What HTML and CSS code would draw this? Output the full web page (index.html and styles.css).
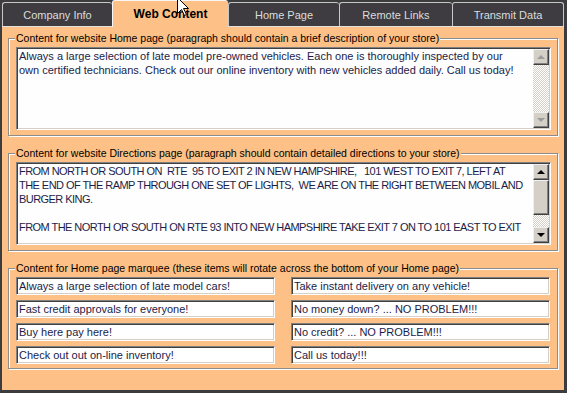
FILE: index.html
```html
<!DOCTYPE html>
<html lang="en">
<head>
    <meta charset="UTF-8">
    <title>Web Content</title>
    <link rel="stylesheet" href="styles.css">
</head>
<body>
    <div class="window">
        <div class="tabs">
            <div class="tab tab-company">Company Info</div>
            <div class="tab tab-web active">Web Content</div>
            <div class="tab tab-home">Home Page</div>
            <div class="tab tab-links">Remote Links</div>
            <div class="tab tab-transmit">Transmit Data</div>
        </div>

        <div class="panel">
            <fieldset class="group">
                <legend>Content for website Home page (paragraph should contain a brief description of your store)</legend>
                <div class="memo">
                    <div class="memo-text">Always a large selection of late model pre-owned vehicles. Each one is thoroughly inspected by our
own certified technicians. Check out our online inventory with new vehicles added daily. Call us today!</div>
                    <div class="scrollbar disabled">
                        <div class="sb-btn"><span class="arrow up"></span></div>
                        <div class="sb-track"></div>
                        <div class="sb-btn"><span class="arrow down"></span></div>
                    </div>
                </div>
            </fieldset>

            <fieldset class="group">
                <legend>Content for website Directions page (paragraph should contain detailed directions to your store)</legend>
                <div class="memo">
                    <div class="memo-text caps">FROM NORTH OR SOUTH ON  RTE  95 TO EXIT 2 IN NEW HAMPSHIRE,   101 WEST TO EXIT 7, LEFT AT
THE END OF THE RAMP THROUGH ONE SET OF LIGHTS,  WE ARE ON THE RIGHT BETWEEN MOBIL AND
BURGER KING.

FROM THE NORTH OR SOUTH ON RTE 93 INTO NEW HAMPSHIRE TAKE EXIT 7 ON TO 101 EAST TO EXIT</div>
                    <div class="scrollbar">
                        <div class="sb-btn"><span class="arrow up"></span></div>
                        <div class="sb-thumb"></div>
                        <div class="sb-track"></div>
                        <div class="sb-btn"><span class="arrow down"></span></div>
                    </div>
                </div>
            </fieldset>

            <fieldset class="group last">
                <legend>Content for Home page marquee (these items will rotate across the bottom of your Home page)</legend>
                <div class="marquee">
                    <input class="line" type="text" value="Always a large selection of late model cars!">
                    <input class="line" type="text" value="Take instant delivery on any vehicle!">
                    <input class="line" type="text" value="Fast credit approvals for everyone!">
                    <input class="line" type="text" value="No money down? ... NO PROBLEM!!!">
                    <input class="line" type="text" value="Buy here pay here!">
                    <input class="line" type="text" value="No credit? ... NO PROBLEM!!!">
                    <input class="line" type="text" value="Check out out on-line inventory!">
                    <input class="line" type="text" value="Call us today!!!">
                </div>
            </fieldset>
        </div>

        <svg class="cursor" width="13" height="20" viewBox="0 0 13 20">
            <path d="M0.5 0.5 V16.5 L4.5 12.5 L7.5 18.5 L9.5 17.5 L6.5 11.5 H11.5 Z" fill="#fff" stroke="#000"/>
        </svg>
    </div>
</body>
</html>
```

FILE: styles.css
```css
* {
    margin: 0;
    padding: 0;
    box-sizing: border-box;
}

body {
    background-color: #3c3b3e;
    font-family: "Liberation Sans", Arial, sans-serif;
    font-size: 11px;
}

.window {
    position: relative;
    width: 567px;
    height: 393px;
    overflow: hidden;
}

/* tab strip */
.tabs {
    display: flex;
    align-items: flex-end;
    height: 26px;
    padding-left: 2px;
}

.tab {
    height: 24px;
    display: flex;
    align-items: center;
    justify-content: center;
    color: #dcdcdc;
    background-color: #3e3c40;
    border-top: 1px solid #c8c8c8;
    border-left: 1px solid #c8c8c8;
    border-radius: 3px 3px 0 0;
}

.tab-company { width: 110px; }
.tab-web { width: 116px; }
.tab-home { width: 111px; }
.tab-links { width: 113px; }
.tab-transmit {
    width: 112px;
    border-right: 1px solid #c8c8c8;
}

.tab.active {
    height: 27px;
    margin-bottom: -1px;
    position: relative;
    z-index: 1;
    background-color: #fdc086;
    border-color: #f6f6f6;
    color: #000;
    font-weight: bold;
    font-size: 12px;
}

/* orange page */
.panel {
    width: 562px;
    height: 364px;
    margin-left: 2px;
    background-color: #fdc086;
    border-top: 1px solid #e4e0dc;
    padding: 5px 6px 0;
}

.group {
    border: 1px solid #8c8c8c;
    box-shadow: inset 1px 1px 0 #fff, 1px 1px 0 #fff;
    padding: 2px 6px 5px 7px;
    margin-bottom: 11px;
}

.group.last {
    padding-bottom: 4px;
}

.group legend {
    padding: 0 1px;
    margin-left: -1px;
    font-size: 10.5px;
    line-height: 13px;
    background-color: #fdc086;
    color: #000;
}

/* multi-line boxes */
.memo {
    display: flex;
    height: 83px;
    padding: 1px;
    background-color: #fdfefd;
    border: 1px solid;
    border-color: #808080 #fff #fff #808080;
    box-shadow: inset 1px 1px 0 #404040, inset -1px -1px 0 #d4d0c8;
}

.memo-text {
    flex: 1;
    min-width: 0;
    padding: 0 1px;
    white-space: pre;
    overflow: hidden;
    color: #1c1c48;
    line-height: 14px;
}

.memo-text.caps {
    letter-spacing: -0.55px;
}

.scrollbar {
    width: 16px;
    flex-shrink: 0;
    display: flex;
    flex-direction: column;
}

.sb-btn,
.sb-thumb {
    background-color: #d4d0c8;
    border: 1px solid;
    border-color: #f0f0f0 #404040 #404040 #f0f0f0;
    box-shadow: inset -1px -1px 0 #808080;
}

.sb-btn {
    height: 16px;
    display: flex;
    align-items: center;
    justify-content: center;
}

.sb-thumb {
    height: 35px;
}

.sb-track {
    flex: 1;
    background: repeating-conic-gradient(#d4d0c8 0 25%, #fff 0 50%) 0 0 / 2px 2px;
}

.arrow {
    width: 0;
    height: 0;
    border-left: 4px solid transparent;
    border-right: 4px solid transparent;
}

.arrow.up {
    border-bottom: 4px solid #000;
}

.arrow.down {
    border-top: 4px solid #000;
}

.disabled .arrow.up {
    border-bottom-color: #9c9c9c;
}

.disabled .arrow.down {
    border-top-color: #9c9c9c;
}

/* marquee lines */
.marquee {
    display: grid;
    grid-template-columns: 259px 259px;
    column-gap: 16px;
    row-gap: 5px;
}

.line {
    height: 18px;
    width: 100%;
    padding: 0 2px;
    background-color: #fff;
    border: 1px solid;
    border-color: #808080 #fff #fff #808080;
    box-shadow: inset 1px 1px 0 #404040, inset -1px -1px 0 #d4d0c8;
    font-family: "Liberation Sans", Arial, sans-serif;
    font-size: 11px;
    color: #1c1c48;
    outline: none;
}

.cursor {
    position: absolute;
    left: 177px;
    top: -3px;
    z-index: 2;
}
```
